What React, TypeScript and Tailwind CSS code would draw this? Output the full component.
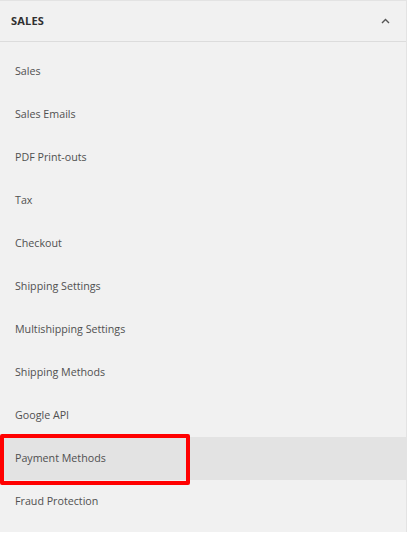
import React from 'react';

const items = [
    'Sales',
    'Sales Emails',
    'PDF Print-outs',
    'Tax',
    'Checkout',
    'Shipping Settings',
    'Multishipping Settings',
    'Shipping Methods',
    'Google API',
    'Payment Methods',
    'Fraud Protection',
];

const App: React.FC = () => {
    const active = 'Payment Methods';

    return (
        <div className="w-[408px] h-[533px] bg-white" style={{ fontFamily: '"Open Sans", "Liberation Sans", sans-serif' }}>
            <div className="w-[407px] h-[532px] bg-[#f1f1f1] border-t border-r border-[#e3e3e3]">
                <div className="h-[41px] flex items-center justify-between pl-[11px] pr-[16px] border-b border-[#dcdcdc]">
                    <span className="text-[11px] font-bold text-[#303030] tracking-[0.2px]">SALES</span>
                    <svg width="9" height="6" viewBox="0 0 9 6" fill="none" stroke="#555" strokeWidth="1.4">
                        <path d="M1 5l3.5-3.5L8 5" />
                    </svg>
                </div>
                <ul className="pt-[8px] pb-[8px]">
                    {items.map((item) => (
                        <li key={item} className="relative">
                            <div
                                className={
                                    item === active
                                        ? 'h-[43px] flex items-center pl-[15px] text-[10.7px] text-[#505050] bg-[#e3e3e3]'
                                        : 'h-[43px] flex items-center pl-[15px] text-[10.7px] text-[#505050]'
                                }
                            >
                                {item}
                            </div>
                            {item === active && (
                                <div className="absolute left-0 top-[-3px] w-[190px] h-[51px] border-4 border-[#ff0000] rounded-[2px]" />
                            )}
                        </li>
                    ))}
                </ul>
            </div>
        </div>
    );
};

export default App;
